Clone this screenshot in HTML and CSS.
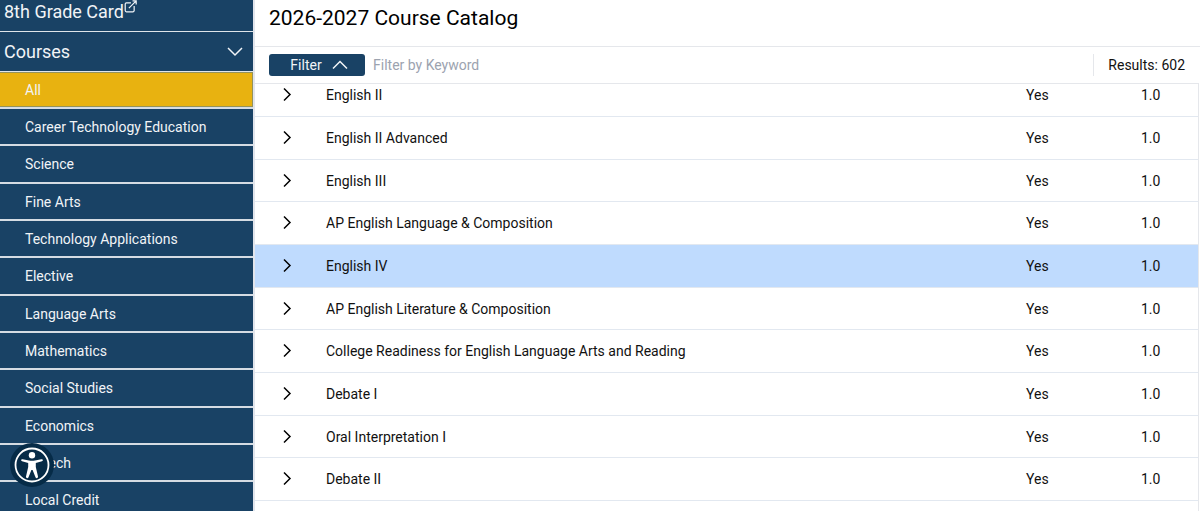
FILE: index.html
```html
<!DOCTYPE html>
<html lang="en">
<head>
    <meta charset="UTF-8">
    <meta name="viewport" content="width=device-width, initial-scale=1.0">
    <title>2026-2027 Course Catalog</title>
    <link rel="stylesheet" href="styles.css">
</head>
<body>
<nav class="sidebar">
    <a class="section-link" href="#card">8th Grade Card<svg class="external" viewBox="0 0 16 16"><path d="M8.5 3.5H3A1.5 1.5 0 0 0 1.5 5v8A1.5 1.5 0 0 0 3 14.5h8a1.5 1.5 0 0 0 1.5-1.5V7.5M10.500 1H15v4.500M15 1 6 10"/></svg></a>
    <button class="section-link" type="button">Courses<svg class="chevron" viewBox="0 0 16 16"><path d="M1 4l7 7 7-7"/></svg></button>
    <div class="categories">
        <a class="active" href="#all">All</a>
        <a href="#cte">Career Technology Education</a>
        <a href="#science">Science</a>
        <a href="#fine-arts">Fine Arts</a>
        <a href="#tech-apps">Technology Applications</a>
        <a href="#elective">Elective</a>
        <a href="#language-arts">Language Arts</a>
        <a href="#mathematics">Mathematics</a>
        <a href="#social-studies">Social Studies</a>
        <a href="#economics">Economics</a>
        <a href="#speech">Speech</a>
        <a href="#local-credit">Local Credit</a>
    </div>
</nav>

<main>
    <h1>2026-2027 Course Catalog</h1>
    <div class="toolbar">
        <button class="filter" type="button">Filter<svg class="chevron" viewBox="0 0 16 16"><path d="M1 11.500l7-7 7 7"/></svg></button>
        <input class="keyword" type="text" placeholder="Filter by Keyword" aria-label="Filter by Keyword">
        <div class="results">Results: 602</div>
    </div>
    <div class="list">
        <table>
            <tbody id="courses"></tbody>
        </table>
    </div>
</main>

<button class="accessibility" type="button" aria-label="Accessibility menu">
    <svg viewBox="0 0 44 44">
        <circle cx="22" cy="22" r="16.500" fill="none" stroke="#fff" stroke-width="1.800"/>
        <circle cx="22" cy="12.300" r="3.200" fill="#fff"/>
        <path fill="#fff" d="M12.600 16.200l6.400 1.200q3 .6 6 0l6.400-1.200q1.300-.2 1.500.8.100 1-1 1.300l-6.100 1.600v4.200l2.200 9.400q.2 1.300-.8 1.600-1.200.3-1.700-.9L22.600 27h-1.200l-2.900 7.200q-.5 1.200-1.700.9-1-.3-.8-1.600l2.200-9.400v-4.200l-6.100-1.600q-1.100-.3-1-1.300.2-1 1.500-.8z"/>
    </svg>
</button>

<script>
    const courses = [
        { name: 'English II', credit: '1.0' },
        { name: 'English II Advanced', credit: '1.0' },
        { name: 'English III', credit: '1.0' },
        { name: 'AP English Language & Composition', credit: '1.0' },
        { name: 'English IV', credit: '1.0', selected: true },
        { name: 'AP English Literature & Composition', credit: '1.0' },
        { name: 'College Readiness for English Language Arts and Reading', credit: '1.0' },
        { name: 'Debate I', credit: '1.0' },
        { name: 'Oral Interpretation I', credit: '1.0' },
        { name: 'Debate II', credit: '1.0' }
    ];

    const tbody = document.getElementById('courses');
    courses.forEach(course => {
        const row = document.createElement('tr');
        if (course.selected) row.className = 'selected';
        row.innerHTML = `
            <td class="toggle"><button type="button" aria-label="Show details"><svg viewBox="0 0 16 16"><path d="M5 1.500l6 6-6 6"/></svg></button></td>
            <td class="name"></td>
            <td class="offered">Yes</td>
            <td class="credit">${course.credit}</td>
        `;
        row.querySelector('.name').textContent = course.name;
        tbody.appendChild(row);
    });
</script>
</body>
</html>
```
FILE: styles.css
```css
* {
    margin: 0; padding: 0; box-sizing: border-box;
}

body {
    display: flex;
    height: 100vh;
    overflow: hidden;
    font-family: Roboto, sans-serif;
    font-size: 14px;
    color: #111;
    background: #fff;
}

button, input {
    font: inherit;
    border: none;
    background: none;
}

button {
    cursor: pointer;
}

svg {
    fill: none;
    stroke: currentColor;
    stroke-width: 1.5;
}

/* sidebar */
.sidebar {
    flex: 0 0 255px;
    margin-top: -8px;
    border-right: 2px solid #e2e5ec;
    color: #f1f4f7;
    background: #194265;
}

.sidebar a {
    color: inherit;
    text-decoration: none;
}

.section-link {
    display: flex;
    align-items: center;
    width: 100%;
    height: 40px;
    padding: 0 10px 0 4px;
    border-bottom: 1px solid #dfe5ea;
    color: inherit;
    font-size: 18px;
}

.section-link .chevron {
    width: 16px;
    margin-left: auto;
}

.external {
    width: 13px;
    height: 13px;
    margin-bottom: 10px;
}

.categories a {
    display: flex;
    align-items: center;
    height: 37px;
    padding-left: 25px;
    border-bottom: 2px solid #d5dce3;
}

.categories a:nth-child(3n) {
    height: 38px;
}

.categories .active {
    background: #e8b210;
    box-shadow: inset -1px 1px #94925b, inset 0 -1px #94925b;
}

/* catalog */
main {
    flex: 1;
    min-width: 0;
    display: flex;
    flex-direction: column;
}

h1 {
    height: 47px;
    padding: 4px 14px;
    border-bottom: 1px solid #e5e7eb;
    font-size: 21px;
    font-weight: 400;
    line-height: 28px;
    color: #000;
}

.toolbar {
    display: flex;
    align-items: center;
    gap: 8px;
    height: 36px;
    padding: 0 15px 0 14px;
}

.filter {
    display: flex;
    align-items: center;
    justify-content: center;
    gap: 10px;
    width: 96px;
    height: 22px;
    padding-left: 4px;
    border-radius: 3px;
    color: #f1f4f7;
    background: #194265;
}

.filter .chevron {
    width: 16px;
}

.keyword {
    flex: 1;
    min-width: 0;
    outline: none;
}

.keyword::placeholder {
    color: #9ca3af;
}

.results {
    padding-left: 14px;
    border-left: 1px solid #e5e7eb;
    line-height: 22px;
}

.list {
    flex: 1;
    min-height: 0;
    margin-right: 1px;
    overflow: hidden;
    border-top: 1px solid #e5e7eb;
    border-right: 1px solid #e5e7eb;
}

table {
    width: 100%;
    margin-top: -10px;
    border-collapse: separate;
    border-spacing: 0;
}

td {
    height: 43px;
    border-bottom: 1px solid #e2e8f0;
}

tr:nth-child(3n) td {
    height: 42px;
}

.selected td {
    background: #bfdbfe;
}

.toggle {
    width: 71px;
    padding-left: 24px;
}

.toggle button, .toggle svg {
    display: block;
    width: 16px;
    height: 16px;
}

.offered {
    width: 115px;
}

.credit {
    width: 57px;
}

/* floating button */
.accessibility {
    position: fixed;
    left: 10px;
    bottom: 24px;
    width: 44px;
    height: 44px;
    border-radius: 50%;
    background: #062b47;
}

.accessibility svg {
    display: block;
    stroke: none;
}
```
